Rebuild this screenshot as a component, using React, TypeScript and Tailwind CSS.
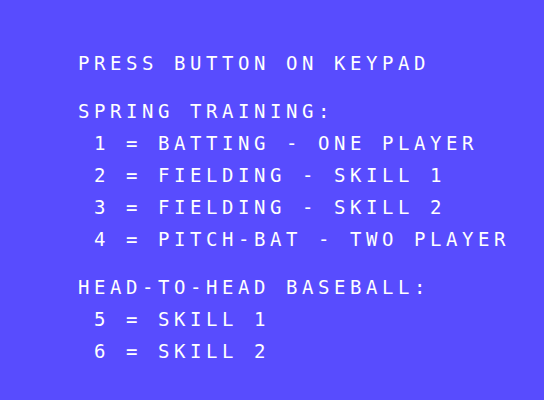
import React from "react";

const lines: { text: string; gap?: boolean }[] = [
  { text: "PRESS BUTTON ON KEYPAD" },
  { text: "SPRING TRAINING:", gap: true },
  { text: " 1 = BATTING - ONE PLAYER" },
  { text: " 2 = FIELDING - SKILL 1" },
  { text: " 3 = FIELDING - SKILL 2" },
  { text: " 4 = PITCH-BAT - TWO PLAYER" },
  { text: "HEAD-TO-HEAD BASEBALL:", gap: true },
  { text: " 5 = SKILL 1" },
  { text: " 6 = SKILL 2" },
];

export default function App() {
  return (
    <div className="w-[544px] h-[400px] overflow-hidden bg-[#584cfe] pt-[47px] pl-[78px]">
      <div
        className="flex flex-col text-white text-[19px] leading-[32px] tracking-[4.56px] whitespace-pre"
        style={{ fontFamily: '"DejaVu Sans Mono", monospace' }}
      >
        {lines.map((l, i) => (
          <div key={i} className={l.gap ? "mt-[16px]" : ""}>
            {l.text}
          </div>
        ))}
      </div>
    </div>
  );
}
